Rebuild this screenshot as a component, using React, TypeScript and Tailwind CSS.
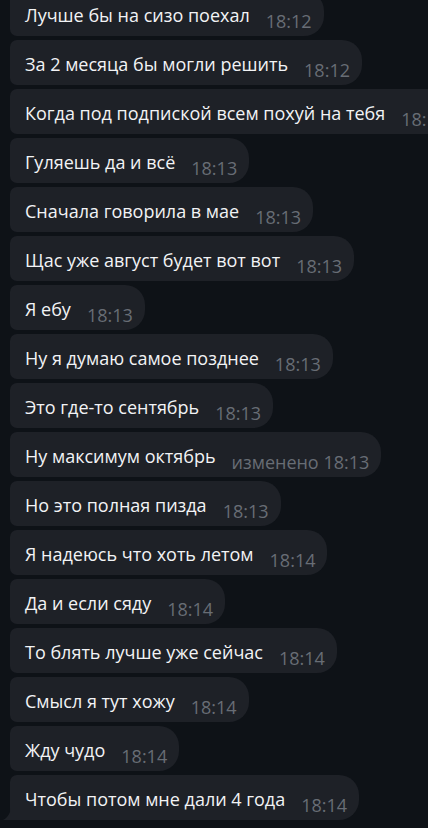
import React from "react";

type Msg = { text: string; time: string; edited?: boolean };

const messages: Msg[] = [
  { text: "Лучше бы на сизо поехал", time: "18:12" },
  { text: "За 2 месяца бы могли решить", time: "18:12" },
  { text: "Когда под подпиской всем похуй на тебя", time: "18:12" },
  { text: "Гуляешь да и всё", time: "18:13" },
  { text: "Сначала говорила в мае", time: "18:13" },
  { text: "Щас уже август будет вот вот", time: "18:13" },
  { text: "Я ебу", time: "18:13" },
  { text: "Ну я думаю самое позднее", time: "18:13" },
  { text: "Это где-то сентябрь", time: "18:13" },
  { text: "Ну максимум октябрь", time: "18:13", edited: true },
  { text: "Но это полная пизда", time: "18:13" },
  { text: "Я надеюсь что хоть летом", time: "18:14" },
  { text: "Да и если сяду", time: "18:14" },
  { text: "То блять лучше уже сейчас", time: "18:14" },
  { text: "Смысл я тут хожу", time: "18:14" },
  { text: "Жду чудо", time: "18:14" },
  { text: "Чтобы потом мне дали 4 года", time: "18:14" },
];

function Bubble({ msg, last }: { msg: Msg; last: boolean }) {
  return (
    <div className="relative flex">
      <div
        className={`flex h-[45px] shrink-0 items-end whitespace-nowrap bg-[#1e2127] pb-[5px] pl-[15px] pr-3 rounded-l-[7px] rounded-r-[20px] ${
          last ? "rounded-bl-none" : ""
        }`}
      >
        <span className="mb-[6px] text-[18px] leading-5 text-[#f2f3f5]">
          {msg.text}
        </span>
        <span className="ml-[16px] text-[18px] leading-5 text-[#686d75]">
          {msg.edited ? "изменено " : ""}
          {msg.time}
        </span>
      </div>
      {last && (
        <svg
          className="absolute bottom-0 left-[-7px]"
          width="8"
          height="12"
          viewBox="0 0 8 12"
        >
          <path d="M8 0 V12 H0 C4 10 7 6 8 0 Z" fill="#1e2127" />
        </svg>
      )}
    </div>
  );
}

export default function App() {
  return (
    <div
      className="h-[828px] w-[428px] overflow-hidden bg-[#0e1217]"
      style={{ fontFamily: '"Open Sans", "Noto Sans", sans-serif' }}
    >
      <div className="-mt-[9px] flex flex-col gap-1 pl-[10px]">
        {messages.map((m, i) => (
          <Bubble key={i} msg={m} last={i === messages.length - 1} />
        ))}
      </div>
    </div>
  );
}
